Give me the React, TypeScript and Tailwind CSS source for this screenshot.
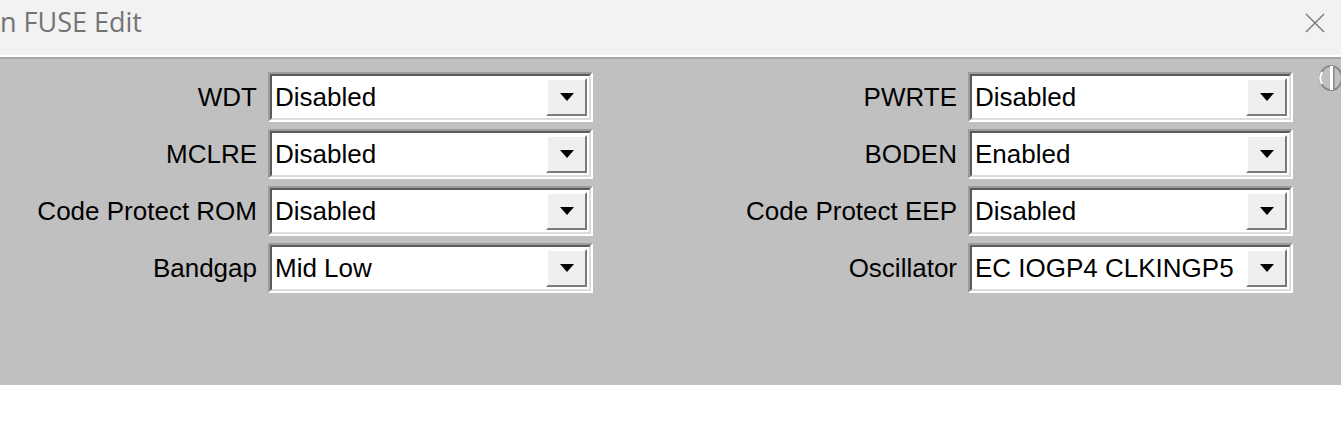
import React from "react";

type Row = { l: string; lv: string; r: string; rv: string };

const rows: Row[] = [
  { l: "WDT", lv: "Disabled", r: "PWRTE", rv: "Disabled" },
  { l: "MCLRE", lv: "Disabled", r: "BODEN", rv: "Enabled" },
  { l: "Code Protect ROM", lv: "Disabled", r: "Code Protect EEP", rv: "Disabled" },
  { l: "Bandgap", lv: "Mid Low", r: "Oscillator", rv: "EC IOGP4 CLKINGP5" },
];

function Combo({ value }: { value: string }) {
  return (
    <div className="ml-[11px] h-[50px] w-[325px] border-2 border-t-[#9c9c9c] border-l-[#9c9c9c] border-b-white border-r-white">
      <div className="flex h-full w-full border-2 border-t-[#5a5a5a] border-l-[#5a5a5a] border-b-[#dcdcdc] border-r-[#dcdcdc] bg-white">
        <div className="flex flex-1 items-center overflow-hidden whitespace-nowrap pl-[3px] text-[26px] leading-none text-black">
          {value}
        </div>
        <div className="my-[2px] mr-[2px] flex h-[38px] w-[41px] items-center justify-center border-2 border-t-white border-l-white border-b-[#7a7a7a] border-r-[#7a7a7a] bg-[#efefef]">
          <svg width="16" height="8" viewBox="0 0 16 8">
            <polygon points="1,0 15,0 8,8" fill="#000" />
          </svg>
        </div>
      </div>
    </div>
  );
}

export default function App() {
  return (
    <div
      className="h-[432px] w-[1341px] overflow-hidden bg-white"
      style={{ fontFamily: '"Liberation Sans", Arial, sans-serif' }}
    >
      <div
        className="flex h-[55px] items-start justify-between bg-[#f2f2f2] pt-[5px]"
        style={{ fontFamily: '"Open Sans", "Noto Sans", sans-serif' }}
      >
        <div className="text-[27px] leading-[34px] text-[#747474]">n FUSE Edit</div>
        <svg className="mr-[16px] mt-[8px]" width="20" height="20" viewBox="0 0 20 20">
          <path d="M1 1 L19 19 M19 1 L1 19" stroke="#777" strokeWidth="1.4" fill="none" />
        </svg>
      </div>
      <div className="h-[2px] bg-white" />
      <div className="h-[2px] bg-[#a6a6a6]" />
      <div className="relative flex h-[326px] flex-col gap-[7px] bg-[#c0c0c0] pt-[13px]">
        {rows.map((r) => (
          <div key={r.l} className="flex h-[50px] items-center">
            <div className="w-[257px] whitespace-nowrap text-right text-[26px] leading-none text-black">
              {r.l}
            </div>
            <Combo value={r.lv} />
            <div className="w-[364px] whitespace-nowrap text-right text-[26px] leading-none text-black">
              {r.r}
            </div>
            <Combo value={r.rv} />
          </div>
        ))}
        <svg className="absolute right-[-10px] top-[5px]" width="34" height="30" viewBox="0 0 34 30">
          <ellipse cx="14" cy="14" rx="11" ry="12" fill="none" stroke="#8a8a8a" strokeWidth="2" />
          <path d="M5 8 A10 11 0 0 0 5 20" stroke="#ffffff" strokeWidth="2" fill="none" />
          <rect x="13" y="2" width="3" height="24" fill="#ffffff" />
          <rect x="16" y="2" width="1.5" height="24" fill="#8a8a8a" />
        </svg>
      </div>
    </div>
  );
}
